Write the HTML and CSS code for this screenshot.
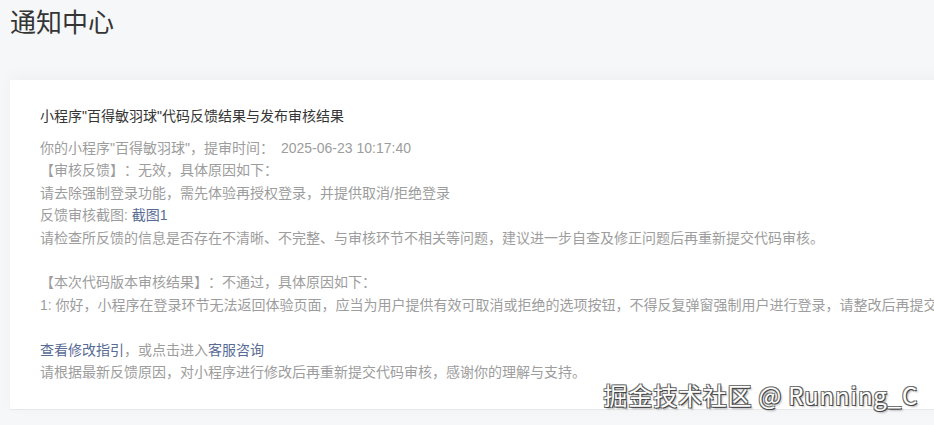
FILE: index.html
```html
<!DOCTYPE html>
<html>
<head>
	<meta charset="utf-8">
	<title>通知中心</title>
	<link rel="stylesheet" href="styles.css">
</head>
<body>
	<div class="page">
		<h1 class="page-title">通知中心</h1>
		<div class="notice-card">
			<div class="notice-title">小程序"百得敏羽球"代码反馈结果与发布审核结果</div>
			<div class="notice-body">
				<p>你的小程序"百得敏羽球"，提审时间：<span class="time">2025-06-23 10:17:40</span></p>
				<p>【审核反馈】：无效，具体原因如下：</p>
				<p>请去除强制登录功能，需先体验再授权登录，并提供取消/拒绝登录</p>
				<p>反馈审核截图: <a class="link" href="#">截图1</a></p>
				<p>请检查所反馈的信息是否存在不清晰、不完整、与审核环节不相关等问题，建议进一步自查及修正问题后再重新提交代码审核。</p>
				<p class="blank"></p>
				<p>【本次代码版本审核结果】：不通过，具体原因如下：</p>
				<p>1: 你好，小程序在登录环节无法返回体验页面，应当为用户提供有效可取消或拒绝的选项按钮，不得反复弹窗强制用户进行登录，请整改后再提交审核。</p>
				<p class="blank"></p>
				<p><a class="link" href="#">查看修改指引</a>，或点击进入<a class="link" href="#">客服咨询</a></p>
				<p>请根据最新反馈原因，对小程序进行修改后再重新提交代码审核，感谢你的理解与支持。</p>
			</div>
		</div>
	</div>
	<div class="watermark">掘金技术社区 @ Running_C</div>
</body>
</html>
```

FILE: styles.css
```css
html, body {
	margin: 0;
	padding: 0;
	width: 100vw;
	height: 100vh;
	overflow: hidden;
	background-color: #f6f7f9;
	font-family: "Liberation Sans", "Noto Sans CJK SC", sans-serif;
	text-spacing-trim: space-all;
}
.page {
	padding: 0 0 0 10px;
}
.page-title {
	margin: 0;
	padding-top: 5px;
	height: 75px;
	font-size: 26px;
	font-weight: normal;
	line-height: 36px;
	color: #353535;
}
.notice-card {
	width: 1000px;
	background-color: #fff;
	padding: 25px 30px 26px;
	box-shadow: 0 -4px 16px rgba(0,0,0,0.03);
	border-bottom: 1px solid #e7e8eb;
	white-space: nowrap;
}
.notice-title {
	font-size: 14px;
	line-height: 22px;
	color: #353535;
	margin-bottom: 10px;
}
.notice-body {
	font-size: 14px;
	line-height: 22.4px;
	color: #9d9d9d;
}
.notice-body p {
	margin: 0;
	height: 22.4px;
}
.time {
	margin-left: 7px;
}
.link {
	color: #576b95;
	text-decoration: none;
}
.watermark {
	position: absolute;
	right: 16px;
	bottom: 15px;
	font-size: 24px;
	line-height: 30px;
	color: #fff;
	font-family: "Noto Sans CJK SC", "Noto Sans", sans-serif;
	letter-spacing: 0.8px;
	text-shadow: 1px 1px 0 #444, -1px -1px 0 #777, 1px -1px 0 #666, -1px 1px 0 #666, 2px 2px 2px rgba(0,0,0,0.3);
}
```
